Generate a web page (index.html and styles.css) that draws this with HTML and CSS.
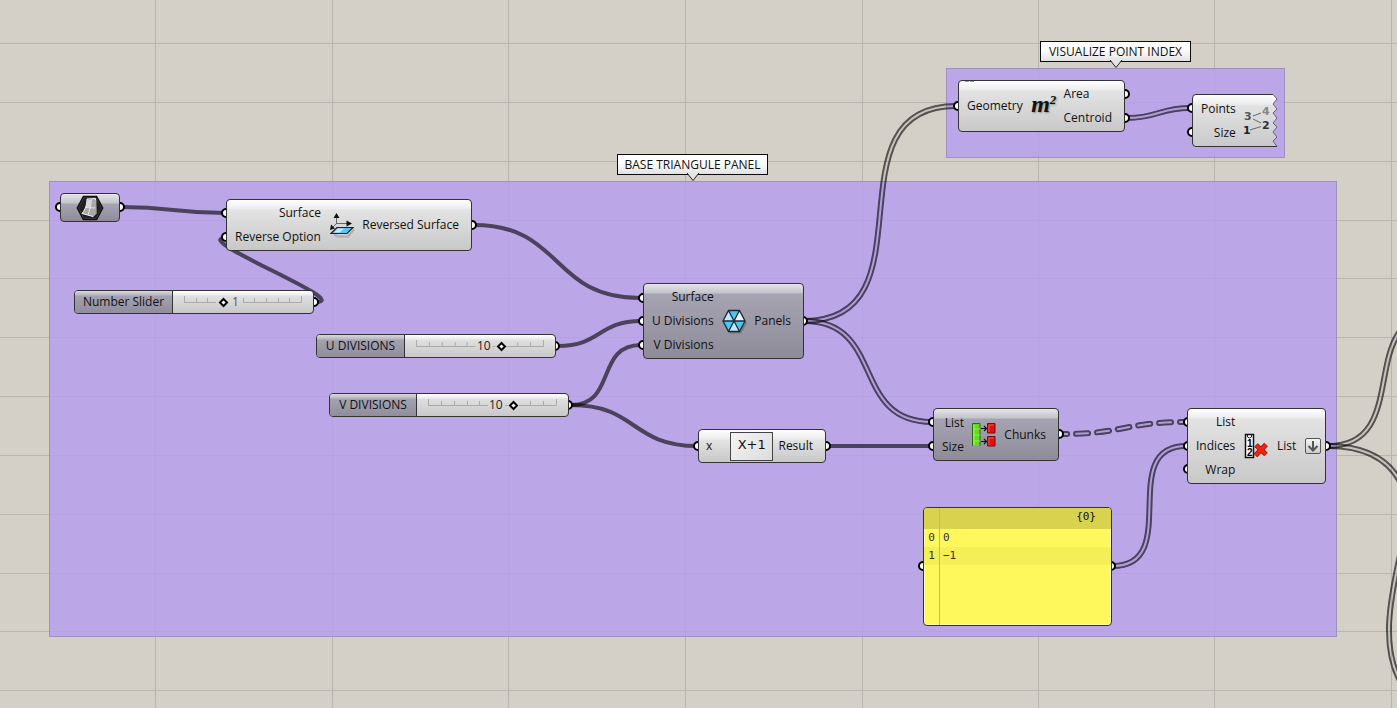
FILE: index.html
```
<!DOCTYPE html>
<html lang="en">
<head>
<meta charset="utf-8">
<title>Node canvas</title>
<link rel="stylesheet" href="styles.css">
</head>
<body>
<main class="canvas">
  <svg class="layer grid" aria-hidden="true">
    <path d="M155.5 0V2000M332.5 0V2000M508.5 0V2000M685.5 0V2000M862.5 0V2000M1038.5 0V2000M1214.5 0V2000M1391.5 0V2000"/>
    <path d="M0 43.5H4000M0 102.5H4000M0 161.5H4000M0 220.5H4000M0 278.5H4000M0 337.5H4000M0 396.5H4000M0 455.5H4000M0 514.5H4000M0 573.5H4000M0 631.5H4000M0 690.5H4000"/>
  </svg>

  <div class="group group-base"></div>
  <div class="group group-index"></div>

  <svg class="layer" aria-hidden="true">
    <defs>
      <path id="w1" d="M804 321C936 321 824 106 956 106"/>
      <path id="w2" d="M804 321C886 321 850 422 932 422"/>
      <path id="w3" d="M1127 118C1158 118 1159 108 1190 108"/>
      <path id="w4" d="M1113 566C1183 566 1116 446 1186 446"/>
      <path id="w5" d="M1328 446C1415 446 1353 314 1439 314"/>
      <path id="w6" d="M1328 446C1369 446 1393 462 1404 490"/>
      <path id="w7" d="M1400 555C1390 600 1380 650 1403 686"/>
      <path id="w8" d="M1062 434C1125 434 1124 422 1187 422"/>
      <mask id="m1" maskUnits="userSpaceOnUse" x="0" y="0" width="1600" height="900"><use href="#w1" class="rim"/><use href="#w1" class="core"/></mask>
      <mask id="m2" maskUnits="userSpaceOnUse" x="0" y="0" width="1600" height="900"><use href="#w2" class="rim"/><use href="#w2" class="core"/></mask>
      <mask id="m3" maskUnits="userSpaceOnUse" x="0" y="0" width="1600" height="900"><use href="#w3" class="rim"/><use href="#w3" class="core"/></mask>
      <mask id="m4" maskUnits="userSpaceOnUse" x="0" y="0" width="1600" height="900"><use href="#w4" class="rim"/><use href="#w4" class="core"/></mask>
      <mask id="m5" maskUnits="userSpaceOnUse" x="0" y="0" width="1600" height="900"><use href="#w5" class="rim"/><use href="#w5" class="core"/></mask>
      <mask id="m6" maskUnits="userSpaceOnUse" x="0" y="0" width="1600" height="900"><use href="#w6" class="rim"/><use href="#w6" class="core"/></mask>
      <mask id="m7" maskUnits="userSpaceOnUse" x="0" y="0" width="1600" height="900"><use href="#w7" class="rim"/><use href="#w7" class="core"/></mask>
      <mask id="m8" maskUnits="userSpaceOnUse" x="0" y="0" width="1600" height="900"><use href="#w8" class="rim dashed"/><use href="#w8" class="core dashed"/></mask>
    </defs>
    <g class="wire">
      <path d="M122 207C173 207 174 213 225 213"/>
      <path d="M316 302C354 302 188 238 226 238"/>
      <path d="M474 225C564 225 550 298 640 298"/>
      <path d="M558 346C601 346 598 321 641 321"/>
      <path d="M571 405C617 405 595 345 641 345"/>
      <path d="M571 405C637 405 631 446 697 446"/>
      <path d="M828 446H932"/>
    </g>
    <g class="wire list">
      <g mask="url(#m1)"><use href="#w1"/></g>
      <g mask="url(#m2)"><use href="#w2"/></g>
      <g mask="url(#m3)"><use href="#w3"/></g>
      <g mask="url(#m4)"><use href="#w4"/></g>
      <g mask="url(#m5)"><use href="#w5"/></g>
      <g mask="url(#m6)"><use href="#w6"/></g>
      <g mask="url(#m7)"><use href="#w7"/></g>
      <g mask="url(#m8)"><use href="#w8"/></g>
    </g>
    <g class="grips">
      <circle cx="60" cy="207" r="4"/><circle cx="120" cy="207" r="4"/>
      <circle cx="226" cy="213" r="4"/><circle cx="226" cy="237" r="4"/><circle cx="472" cy="225" r="4"/>
      <circle cx="314" cy="302" r="4"/><circle cx="555" cy="346" r="4"/><circle cx="568" cy="405" r="4"/>
      <circle cx="643" cy="298" r="4"/><circle cx="643" cy="321" r="4"/><circle cx="643" cy="345" r="4"/><circle cx="803" cy="321" r="4"/>
      <circle cx="958" cy="106" r="4"/><circle cx="1125" cy="94" r="4"/><circle cx="1125" cy="118" r="4"/>
      <circle cx="1192" cy="108" r="4"/><circle cx="1192" cy="132" r="4"/>
      <circle cx="698" cy="446" r="4"/><circle cx="826" cy="446" r="4"/>
      <circle cx="933" cy="422" r="4"/><circle cx="933" cy="446" r="4"/><circle cx="1059" cy="434" r="4"/>
      <circle cx="1188" cy="422" r="4"/><circle cx="1188" cy="446" r="4"/><circle cx="1188" cy="469" r="4"/><circle cx="1326" cy="446" r="4"/>
      <circle cx="923" cy="566" r="4"/><circle cx="1111" cy="566" r="4"/>
    </g>
  </svg>

  <div class="tag tag-base">BASE TRIANGULE PANEL
    <svg class="pointer" viewBox="0 0 14 9" aria-hidden="true"><path d="M1 0L7 7.500L13 0"/></svg>
  </div>
  <div class="tag tag-index">VISUALIZE POINT INDEX
    <svg class="pointer" viewBox="0 0 14 9" aria-hidden="true"><path d="M1 0L7 7.500L13 0"/></svg>
  </div>

  <section class="node dark param">
    <svg class="hex" viewBox="0 0 28 26" role="img" aria-label="Surface">
      <path d="M7 .8H21L27.500 13L21 25.200H7L.5 13Z" fill="#0c0c0e"/>
      <path d="M7.800 2.500H20.200L25.500 13L20.200 23.500H7.800L2.500 13Z" fill="#202023" stroke="#38383c"/>
      <path d="M11 4L19.500 3.500L20 19L17 21.500L6 18.500C9.500 14 10.500 11 11 4Z" fill="#a8a8a8" stroke="#f4f4f4"/>
      <path d="M11.500 5H15L14 12H10Z" fill="#d8d8d8"/>
      <path d="M15.500 4.500C15 11 13.500 15 12 20M9.500 12.500L20 13" fill="none" stroke="#e4e4e4"/>
      <path d="M17 21.500L20 19V5" fill="none" stroke="#777"/>
    </svg>
  </section>

  <section class="node reverse">
    <ul class="inputs"><li>Surface</li><li>Reverse Option</li></ul>
    <svg class="icon" viewBox="0 0 24 24" aria-hidden="true">
      <path d="M4 22L8 23.500H18L24 16.500" fill="none" stroke="#777" stroke-opacity=".4" stroke-width="2"/>
      <path d="M1 20.500L7 14.500H23L17 20.500Z" fill="#5cc3f2" stroke="#222" stroke-width="1.200"/>
      <path d="M4 19.500L8 15.500H14L10 19.500Z" fill="#c3eafb"/>
      <path d="M6.500 11V3M7 10.500H18M6 11L2 15" fill="none" stroke="#666"/>
      <path d="M6.500 0L9.500 5H3.500ZM22 10.500L16.500 13.500V7.500ZM0 17L1 11.500L5 15.500Z" fill="#111"/>
    </svg>
    <ul class="outputs"><li>Reversed Surface</li></ul>
  </section>

  <section class="slider slider-number">
    <label for="s1">Number Slider</label>
    <div class="track">
      <svg class="ticks" viewBox="0 0 118 7" preserveAspectRatio="none" aria-hidden="true"><path d="M.5 0V6.500H32M12.500 2V6M23.500 2V6M59 6.500H117.500V0M59.500 2V6M70.500 2V6M82.500 2V6M94.500 2V6M105.500 2V6"/></svg>
      <input id="s1" type="range" min="0" max="3" value="1">
      <output for="s1">1</output>
    </div>
  </section>
  <section class="slider slider-u">
    <label for="s2">U DIVISIONS</label>
    <div class="track">
      <svg class="ticks" viewBox="0 0 129 7" preserveAspectRatio="none" aria-hidden="true"><path d="M.5 0V6.500H60M13.500 2V6M26.500 2V6M39.500 2V6M51.500 2V6M77 6.500H80M91 6.500H128.500V0M102.500 2V6M115.500 2V6"/></svg>
      <input id="s2" type="range" min="0" max="15" value="10">
      <output for="s2">10</output>
    </div>
  </section>
  <section class="slider slider-v">
    <label for="s3">V DIVISIONS</label>
    <div class="track">
      <svg class="ticks" viewBox="0 0 129 7" preserveAspectRatio="none" aria-hidden="true"><path d="M.5 0V6.500H60M13.500 2V6M26.500 2V6M39.500 2V6M51.500 2V6M77 6.500H80M91 6.500H128.500V0M102.500 2V6M115.500 2V6"/></svg>
      <input id="s3" type="range" min="0" max="15" value="10">
      <output for="s3">10</output>
    </div>
  </section>

  <section class="node dark panels">
    <ul class="inputs"><li>Surface</li><li>U Divisions</li><li>V Divisions</li></ul>
    <svg class="icon" viewBox="0 0 24 24" aria-hidden="true">
      <path d="M8 3H19L25 14L19 24.500H8L3 14Z" fill="#444" fill-opacity=".35"/>
      <path d="M6.500 1.500H17.500L23 12L17.500 22.500H6.500L1 12Z" fill="#eaf8ff"/>
      <path d="M12 12L6.500 1.500H17.500ZM12 12L23 12L17.500 22.500ZM12 12L1 12L6.500 22.500Z" fill="#4dc4f4"/>
      <path d="M12 12L1 12L6.500 1.500ZM12 12L17.500 22.500H6.500Z" fill="#bfe9fc"/>
      <path d="M6.500 1.500H17.500L23 12L17.500 22.500H6.500L1 12ZM6.500 1.500L17.500 22.500M17.500 1.500L6.500 22.500M1 12H23" fill="none" stroke="#1c2a33" stroke-width="1.300"/>
    </svg>
    <ul class="outputs"><li>Panels</li></ul>
  </section>

  <section class="node expression">
    <ul class="inputs"><li>x</li></ul>
    <span class="formula">X+1</span>
    <ul class="outputs"><li>Result</li></ul>
  </section>

  <section class="node area">
    <ul class="inputs"><li>Geometry</li></ul>
    <span class="icon msq">m<sup>2</sup></span>
    <ul class="outputs"><li>Area</li><li>Centroid</li></ul>
    <span class="dots"></span>
  </section>

  <section class="torn">
    <svg class="torn-shape" viewBox="0 0 87 53" aria-hidden="true">
      <defs><linearGradient id="g" x1="0" y1="0" x2="0" y2="1"><stop offset="0" stop-color="#fff"/><stop offset=".19" stop-color="#ececec"/><stop offset=".2" stop-color="#e3e3e3"/><stop offset="1" stop-color="#c9c9c9"/></linearGradient></defs>
      <path d="M81 .5H4Q.5 .5 .5 4V49Q.5 52.500 4 52.500H85L81 47L85 43L81 38L85 33L81 29L85 24L81 19L85 15L81 10L85 5Z" fill="url(#g)"/>
      <path d="M81 .5H4Q.5 .5 .5 4V49Q.5 52.500 4 52.500H85" fill="none" stroke="#333"/>
      <path d="M81 .5L85 5L81 10L85 15L81 19L85 24L81 29L85 33L81 38L85 43L81 47L85 52.500" fill="none" stroke="#666"/>
    </svg>
    <ul class="inputs"><li>Points</li><li>Size</li></ul>
    <svg class="pts" viewBox="0 0 26 26" aria-hidden="true">
      <path d="M9 8L17 5M9 11L17 15M6 22L17 18.500" stroke="#666" fill="none"/>
      <text x="0" y="12" fill="#555">3</text><text x="18" y="7" fill="#888">4</text><text x="-1" y="26" fill="#222">1</text><text x="18" y="21" fill="#333">2</text>
    </svg>
  </section>

  <section class="node dark chunks">
    <ul class="inputs"><li>List</li><li>Size</li></ul>
    <svg class="icon" viewBox="0 0 24 24" aria-hidden="true">
      <path d="M.5 .5H8V23H.5Z" fill="#62d91f"/>
      <path d="M8 .5H.5V23M8 .5V23" fill="none" stroke="#2d6b12"/>
      <path d="M1 6H8M1 12H8M1 18H8" stroke="#8cf04a"/>
      <path d="M2 2V22" stroke="#a5f56d"/>
      <path d="M9 5.500H14M12 3L14.500 5.500L12 8M9 18.500H14M12 16L14.500 18.500L12 21" fill="none" stroke="#111" stroke-width="1.200"/>
      <path d="M15.500 .5H23V10H15.500ZM15.500 13.500H23V23H15.500Z" fill="#e01010" stroke="#7a0b0b"/>
      <path d="M17 9V2H22M17 22V15H22" fill="none" stroke="#f75050"/>
    </svg>
    <ul class="outputs"><li>Chunks</li></ul>
  </section>

  <section class="node cull">
    <ul class="inputs"><li>List</li><li>Indices</li><li>Wrap</li></ul>
    <svg class="icon" viewBox="0 0 24 24" aria-hidden="true">
      <path d="M1.500 .5H9.500V23.500H1.500Z" fill="#fff" stroke="#111" stroke-width="1.500"/>
      <path d="M3.500 1V3Q5.500 5 7.500 3V1" fill="none" stroke="#222"/>
      <text class="mini" x="3" y="13">1</text><text class="mini" x="3" y="22">2</text>
      <path d="M12 11L22 20.500M22 10.500L11.500 21.500" stroke="#8c1206" stroke-width="5"/>
      <path d="M12 11L22 20.500M22 10.500L11.500 21.500" stroke="#f2230f" stroke-width="3.500"/>
    </svg>
    <ul class="outputs"><li>List</li></ul>
    <button class="flatten" type="button" aria-label="Flatten"><svg viewBox="0 0 12 12" aria-hidden="true"><path d="M6 1V10.500M1.500 6L6 10.500L10.500 6"/></svg></button>
  </section>

  <table class="data">
    <thead><tr><th></th><th class="path">{0}</th></tr></thead>
    <tbody>
      <tr><td>0</td><td>0</td></tr>
      <tr><td>1</td><td>−1</td></tr>
      <tr class="rest"><td></td><td></td></tr>
    </tbody>
  </table>
</main>
</body>
</html>
```
FILE: styles.css
```
* { box-sizing: border-box; }
body {
  margin: 0;
  font: 12px/24px "Open Sans", "Noto Sans", sans-serif;
  color: #111;
}
ul { margin: 0; padding: 0; list-style: none; }

.canvas {
  position: relative;
  min-height: 100vh;
  overflow: hidden;
  background: #d4d0c8;
}
.layer { position: absolute; inset: 0; width: 100%; height: 100%; }
.grid path { fill: none; stroke: #b7b5ad; }

.group { position: absolute; background: rgb(182 157 238 / .84); border: 1px solid #9f90bd; }
.group-base { left: 49px; top: 181px; width: 1288px; height: 456px; }
.group-index { left: 946px; top: 68px; width: 339px; height: 90px; }

.wire { fill: none; stroke: #000; stroke-opacity: .6; stroke-width: 4; }
.wire.list { stroke-width: 7; }
.rim { fill: none; stroke: #fff; stroke-opacity: 1; stroke-width: 6; }
.core { fill: none; stroke: #000; stroke-opacity: .9; stroke-width: 2; }
.dashed { stroke-dasharray: 12 9; stroke-dashoffset: 7; stroke-linecap: round; }
.grips { fill: #fff; stroke: #000; stroke-width: 2; }

/* Group captions */
.tag {
  position: absolute;
  height: 21px;
  font-size: 12px;
  line-height: 19px;
  white-space: nowrap;
  text-align: center;
  border: 1px solid #111;
  outline: 1px solid rgb(0 0 0 / .25);
  outline-offset: -1px;
  background: linear-gradient(#fff 40%, #e2e2e2);
}
.tag-base { left: 617px; top: 154px; width: 151px; }
.tag-index { left: 1040px; top: 41px; width: 151px; }
.pointer { position: absolute; left: 50%; top: 18px; width: 14px; height: 9px; margin-left: -7px; fill: #e4e4e4; stroke: #222; }

/* Components */
.node {
  position: absolute;
  display: flex;
  align-items: center;
  justify-content: space-between;
  padding: 0 12px 0 8px;
  border: 1px solid #333;
  border-radius: 4px;
  background: linear-gradient(#fff, #ececec 9px, #e3e3e3 10px, #c8c8c8);
  box-shadow: inset 0 1px #fff;
}
.dark {
  background: linear-gradient(#e4e4e8, #c3c3cb 9px, #a6a4b2 10px, #8e8c99);
  box-shadow: inset 0 1px #e8e8ec;
}
.inputs { text-align: right; }
.inputs, .outputs { white-space: nowrap; }
.icon { width: 24px; height: 24px; overflow: visible; flex: none; }

.param { left: 60px; top: 193px; width: 60px; height: 29px; justify-content: center; padding: 0; }
.hex { width: 28px; height: 26px; }
.reverse { left: 226px; top: 199px; width: 246px; height: 52px; }
.panels { left: 643px; top: 283px; width: 161px; height: 76px; }
.expression { left: 698px; top: 429px; width: 128px; height: 34px; padding-left: 7px; }
.area { left: 958px; top: 80px; width: 167px; height: 52px; }
.chunks { left: 933px; top: 408px; width: 126px; height: 53px; }
.cull { left: 1187px; top: 408px; width: 139px; height: 76px; padding-right: 4px; }

.formula {
  width: 43px;
  height: 29px;
  text-align: center;
  font: 13px/24px "DejaVu Sans", sans-serif;
  border: 1px solid #444;
  background: linear-gradient(135deg, #f4f4f4, #dcdcdc);
}
.expression .inputs { width: 19px; text-align: left; }

.msq { font: italic bold 24px/20px "Liberation Serif", serif; text-shadow: 1px 1px 2px #888; }
.msq sup { font-size: 13px; line-height: 0; vertical-align: 8px; }
.dots { position: absolute; left: 6px; top: 0; width: 9px; height: 1px; background: linear-gradient(90deg, #999 4px, transparent 4px 5px, #999 5px); }

.torn {
  position: absolute;
  left: 1192px;
  top: 94px;
  width: 87px;
  height: 53px;
  display: flex;
  align-items: center;
  gap: 8px;
  padding-left: 9px;
}
.torn-shape { position: absolute; left: 0; top: 0; width: 100%; height: 100%; }
.torn .inputs, .pts { position: relative; }
.pts { width: 26px; height: 26px; overflow: visible; font: bold 11px "DejaVu Sans", sans-serif; }
.mini { font: bold 10px "Liberation Sans", sans-serif; }

.flatten {
  display: grid;
  place-items: center;
  width: 16px;
  height: 16px;
  padding: 0;
  border: 1px solid #555;
  border-radius: 2px;
  background: linear-gradient(#f4f4f4, #ccc);
}
.flatten svg { width: 12px; height: 12px; fill: none; stroke: #555; stroke-width: 2; }

/* Sliders */
.slider {
  position: absolute;
  display: flex;
  height: 24px;
  width: 240px;
  line-height: 22px;
  border: 1px solid #333;
  border-radius: 4px;
  overflow: hidden;
  background: linear-gradient(#fff, #ececec 4px, #e0e0e0 5px, #c8c8c8);
}
.slider-number { left: 74px; top: 290px; }
.slider-u { left: 316px; top: 334px; }
.slider-v { left: 329px; top: 393px; }
.slider label {
  width: 88px;
  text-align: center;
  border-right: 1px solid #333;
  background: linear-gradient(#d8d8de, #b8b8c0 4px, #a4a2b0 5px, #908e9b);
}
.slider-number label { width: 98px; }
.slider-v label { width: 87px; }
.track { position: relative; flex: 1; }
.ticks { position: absolute; left: 11px; top: 5px; width: calc(100% - 22px); height: 7px; fill: none; stroke: #aaa; }
.track input {
  position: absolute;
  left: 8px;
  top: 7px;
  width: calc(100% - 16px);
  height: 9px;
  margin: 0;
  appearance: none;
  background: none;
}
.track input::-webkit-slider-thumb {
  appearance: none;
  width: 7px;
  height: 7px;
  border: 2px solid #000;
  background: #fff;
  transform: rotate(45deg);
}
.track output { position: absolute; left: 72px; top: 0; color: #222; }
.slider-number output { left: 59px; color: #555; }

/* Data panel */
.data {
  position: absolute;
  left: 923px;
  top: 507px;
  width: 189px;
  height: 119px;
  table-layout: fixed;
  border: 1px solid #333;
  border-radius: 4px;
  border-spacing: 0;
  overflow: hidden;
  background: #fff85c;
  box-shadow: inset 0 0 0 1px #fffda8;
  font: 11px/18px "DejaVu Sans Mono", monospace;
  color: #333;
}
.data th, .data td { padding: 0 3px; text-align: left; font-weight: normal; }
.data th { height: 21px; padding-right: 15px; vertical-align: top; line-height: 18px; background: #d8d24f; }
.data th:first-child, .data td:first-child { width: 16px; padding: 0; text-align: center; border-right: 1px solid #c4be4c; }
.data .path { text-align: right; color: #111; }
.data td { height: 18px; }
.data tr:nth-child(2) td { background: #f4ee57; }
.data .rest td { height: 60px; }
```
